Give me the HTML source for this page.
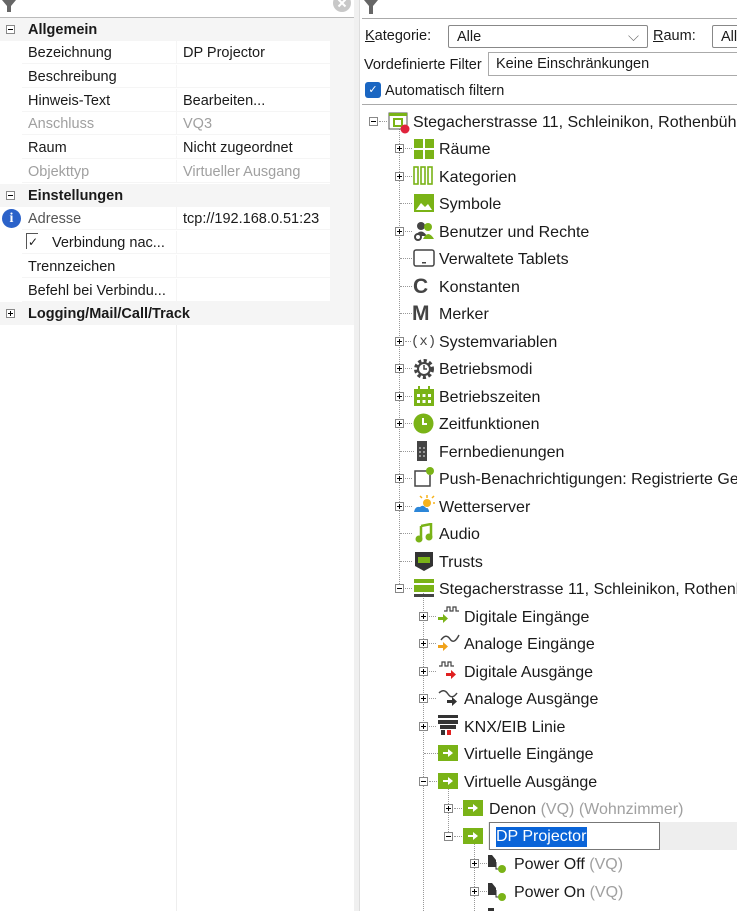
<!DOCTYPE html>
<html><head><meta charset="utf-8">
<style>
*{margin:0;padding:0;box-sizing:border-box}
body{width:737px;height:911px;overflow:hidden;background:#fff;font-family:"Segoe UI","Liberation Sans","DejaVu Sans",sans-serif;font-size:14.5px;color:#1a1a1a;position:relative}
.a{position:absolute;white-space:nowrap}
.g{color:#a0a0a0}
.row{position:absolute;left:22px;width:308px;height:23px;background:#f5f5f5}
.c1,.c2{position:absolute;top:0;height:22px;background:#fff;line-height:24px;padding-left:6px}
.c1{left:0;width:154px}.c2{left:155px;width:153px}
.sec{position:absolute;left:0;width:330px;height:23px;background:#f5f5f5;font-weight:bold;line-height:24px;padding-left:28px}
.bx{position:absolute;width:9px;height:9px;border:1px solid #888;background:#fff}
.bx::before{content:"";position:absolute;left:1px;top:3px;width:5px;height:1px;background:#000}
.bx.p::after{content:"";position:absolute;left:3px;top:1px;width:1px;height:5px;background:#000}
.t{position:absolute;font-size:16px;line-height:20px;white-space:nowrap;color:#1a1a1a;margin-top:2px}
.vl{position:absolute;width:0;border-left:1px dotted #999}
.hl{position:absolute;height:0;border-top:1px dotted #999}
.ic{position:absolute}
.q{color:#a0a0a0}
</style></head><body>

<!-- LEFT PANEL -->
<div class="a" style="left:0;top:0;width:354px;height:911px;background:#fff"></div>
<div class="a" style="left:176px;top:325px;width:1px;height:586px;background:#eee"></div>
<svg class="ic" style="left:2px;top:0" width="14" height="12"><path d="M0 0H14L9 6V12H5V6Z" fill="#666"/></svg>
<svg class="ic" style="left:332px;top:0" width="20" height="14"><circle cx="10" cy="3" r="9" fill="#c8c8c8"/><path d="M6.5 -0.5L13.5 6.5M13.5 -0.5L6.5 6.5" stroke="#fff" stroke-width="2"/></svg>
<div class="a" style="left:0;top:17px;width:354px;height:1px;background:#bbb"></div>
<div class="a" style="left:330px;top:18px;width:24px;height:307px;background:#f5f5f5"></div>

<div class="sec" style="top:18px">Allgemein</div>
<div class="bx" style="left:6px;top:25px"></div>
<div class="row" style="top:41px"><div class="c1">Bezeichnung</div><div class="c2">DP Projector</div></div>
<div class="row" style="top:65px"><div class="c1">Beschreibung</div><div class="c2"></div></div>
<div class="row" style="top:89px"><div class="c1">Hinweis-Text</div><div class="c2">Bearbeiten...</div></div>
<div class="row" style="top:112px"><div class="c1 g">Anschluss</div><div class="c2 g">VQ3</div></div>
<div class="row" style="top:136px"><div class="c1">Raum</div><div class="c2">Nicht zugeordnet</div></div>
<div class="row" style="top:160px"><div class="c1 g">Objekttyp</div><div class="c2 g">Virtueller Ausgang</div></div>
<div class="sec" style="top:184px">Einstellungen</div>
<div class="bx" style="left:6px;top:191px"></div>
<div class="row" style="top:207px"><div class="c1" style="color:#555">Adresse</div><div class="c2">tcp://192.168.0.51:23</div></div>
<div class="a" style="left:2px;top:209px;width:19px;height:19px;border-radius:50%;background:#2b62c9;color:#fff;font:bold 14px/19px 'Liberation Serif',serif;text-align:center">i</div>
<div class="row" style="top:231px"><div class="c1" style="padding-left:30px">Verbindung nac...</div><div class="c2"></div></div>
<div class="a" style="left:26px;top:233px;width:12px;height:16px;border-left:1px solid #555;border-top:1px solid #555;font-size:12px;line-height:16px;padding-left:1px">✓</div>
<div class="row" style="top:255px"><div class="c1">Trennzeichen</div><div class="c2"></div></div>
<div class="row" style="top:279px"><div class="c1">Befehl bei Verbindu...</div><div class="c2"></div></div>
<div class="sec" style="top:302px">Logging/Mail/Call/Track</div>
<div class="bx p" style="left:6px;top:309px"></div>

<!-- SPLITTER -->
<div class="a" style="left:354px;top:0;width:6px;height:911px;background:#f0f0f0"></div>
<div class="a" style="left:359px;top:0;width:1px;height:911px;background:#ddd"></div>

<!-- RIGHT PANEL -->
<svg class="ic" style="left:364px;top:0" width="14" height="14"><path d="M0 0H14L9 6V14H5V6Z" fill="#666"/></svg>
<div class="a" style="left:362px;top:18px;width:375px;height:1px;background:#aaa"></div>
<div class="a" style="left:365px;top:26px;line-height:20px"><u>K</u>ategorie:</div>
<div class="a" style="left:448px;top:25px;width:200px;height:23px;border:1px solid #888;border-radius:2px;padding-left:8px;line-height:22px">Alle<span style="position:absolute;right:8px;top:0;color:#666">⌵</span></div>
<div class="a" style="left:653px;top:26px;line-height:20px"><u>R</u>aum:</div>
<div class="a" style="left:712px;top:25px;width:40px;height:23px;border:1px solid #888;border-radius:2px;padding-left:8px;line-height:22px">Alle</div>
<div class="a" style="left:364px;top:55px;line-height:20px">Vordefinierte Filter</div>
<div class="a" style="left:488px;top:52px;width:260px;height:24px;border:1px solid #aaa;padding-left:7px;line-height:23px">Keine Einschränkungen</div>
<div class="a" style="left:365px;top:82px;width:16px;height:16px;border-radius:3px;background:#1a66c2;color:#fff;font-size:11px;line-height:16px;text-align:center">✓</div>
<div class="a" style="left:385px;top:81px;line-height:20px">Automatisch filtern</div>
<div class="a" style="left:362px;top:104px;width:375px;height:1px;background:#aaa"></div>

<!-- tree lines -->
<div class="vl" style="left:399px;top:126px;height:462px"></div>
<div class="vl" style="left:423px;top:593px;height:318px"></div>
<div class="vl" style="left:448px;top:786px;height:50px"></div>
<div class="vl" style="left:474px;top:841px;height:70px"></div>

<!-- root -->
<div class="bx" style="left:369px;top:117px"></div>
<div class="hl" style="left:379px;top:121px;width:8px"></div>
<svg class="ic" style="left:388px;top:112px" width="22" height="22"><rect x="1" y="1" width="18" height="16" fill="#fff" stroke="#555"/><rect x="1" y="1" width="18" height="3" fill="#7ab317"/><rect x="6" y="7" width="8" height="7" fill="#fff" stroke="#7ab317" stroke-width="2"/><circle cx="17" cy="17" r="4.5" fill="#e0233c"/></svg>
<div class="t" style="left:413px;top:111px">Stegacherstrasse 11, Schleinikon, Rothenbühl</div>

<!-- level1 -->
<div class="bx p" style="left:395px;top:144px"></div><div class="hl" style="left:405px;top:148px;width:7px"></div>
<svg class="ic" style="left:414px;top:139px" width="20" height="20"><rect x="0" y="0" width="9" height="9" fill="#7ab317"/><rect x="11" y="0" width="9" height="9" fill="#7ab317"/><rect x="0" y="11" width="9" height="9" fill="#7ab317"/><rect x="11" y="11" width="9" height="9" fill="#7ab317"/></svg>
<div class="t" style="left:439px;top:138px">Räume</div>

<div class="bx p" style="left:395px;top:172px"></div><div class="hl" style="left:405px;top:176px;width:7px"></div>
<svg class="ic" style="left:413px;top:166px" width="22" height="20" fill="none" stroke="#7ab317" stroke-width="1.6"><rect x="1" y="1" width="4" height="17"/><rect x="8" y="1" width="4" height="17"/><rect x="15" y="1" width="4" height="17"/></svg>
<div class="t" style="left:439px;top:166px">Kategorien</div>

<div class="hl" style="left:400px;top:203px;width:12px"></div>
<svg class="ic" style="left:414px;top:194px" width="20" height="18"><rect width="20" height="18" fill="#7ab317"/><path d="M2 16L7 9L11 13L14 10L18 16Z" fill="#fff"/></svg>
<div class="t" style="left:439px;top:193px">Symbole</div>

<div class="bx p" style="left:395px;top:227px"></div><div class="hl" style="left:405px;top:231px;width:7px"></div>
<svg class="ic" style="left:413px;top:221px" width="22" height="20"><circle cx="8" cy="5" r="4" fill="#444"/><path d="M2 15Q8 6 14 15Z" fill="#444"/><circle cx="5" cy="16" r="3" fill="#fff" stroke="#444" stroke-width="2"/><circle cx="15" cy="6" r="4" fill="#7ab317"/><path d="M10 18Q15 8 21 18Z" fill="#7ab317"/></svg>
<div class="t" style="left:439px;top:221px">Benutzer und Rechte</div>

<div class="hl" style="left:400px;top:258px;width:12px"></div>
<svg class="ic" style="left:413px;top:249px" width="22" height="18"><rect x="1" y="1" width="20" height="16" rx="2" fill="#fff" stroke="#444" stroke-width="1.5"/><rect x="9" y="13" width="4" height="1.5" fill="#444"/></svg>
<div class="t" style="left:439px;top:248px">Verwaltete Tablets</div>

<div class="hl" style="left:400px;top:286px;width:12px"></div>
<div class="a" style="left:413px;top:275px;font:bold 21px/24px 'Liberation Sans',sans-serif;color:#444">C</div>
<div class="t" style="left:439px;top:276px">Konstanten</div>

<div class="hl" style="left:400px;top:313px;width:12px"></div>
<div class="a" style="left:412px;top:302px;font:bold 21px/24px 'Liberation Sans',sans-serif;color:#444">M</div>
<div class="t" style="left:439px;top:303px">Merker</div>

<div class="bx p" style="left:395px;top:337px"></div><div class="hl" style="left:405px;top:341px;width:6px"></div>
<div class="a" style="left:411px;top:332px;font:14px/20px 'Liberation Mono',monospace;color:#444">(x)</div>
<div class="t" style="left:439px;top:331px">Systemvariablen</div>

<div class="bx p" style="left:395px;top:364px"></div><div class="hl" style="left:405px;top:368px;width:7px"></div>
<svg class="ic" style="left:414px;top:359px" width="20" height="20"><circle cx="10" cy="10" r="8" fill="none" stroke="#444" stroke-width="4" stroke-dasharray="3 2.3"/><circle cx="10" cy="10" r="6" fill="#fff" stroke="#444" stroke-width="2"/><path d="M10 6V10H13" stroke="#444" stroke-width="1.5" fill="none"/></svg>
<div class="t" style="left:439px;top:358px">Betriebsmodi</div>

<div class="bx p" style="left:395px;top:392px"></div><div class="hl" style="left:405px;top:396px;width:7px"></div>
<svg class="ic" style="left:414px;top:386px" width="20" height="20"><rect x="0" y="3" width="20" height="17" fill="#7ab317"/><rect x="4" y="0" width="2" height="5" fill="#7ab317"/><rect x="14" y="0" width="2" height="5" fill="#7ab317"/><g fill="#fff"><rect x="3" y="8" width="3" height="3"/><rect x="8.5" y="8" width="3" height="3"/><rect x="14" y="8" width="3" height="3"/><rect x="3" y="14" width="3" height="3"/><rect x="8.5" y="14" width="3" height="3"/><rect x="14" y="14" width="3" height="3"/></g></svg>
<div class="t" style="left:439px;top:386px">Betriebszeiten</div>

<div class="bx p" style="left:395px;top:419px"></div><div class="hl" style="left:405px;top:423px;width:7px"></div>
<svg class="ic" style="left:413px;top:413px" width="21" height="21"><circle cx="10.5" cy="10.5" r="10" fill="#7ab317"/><path d="M10 5V11H14" stroke="#fff" stroke-width="2" fill="none"/></svg>
<div class="t" style="left:439px;top:413px">Zeitfunktionen</div>

<div class="hl" style="left:400px;top:451px;width:14px"></div>
<svg class="ic" style="left:417px;top:441px" width="12" height="20"><rect width="10" height="20" fill="#444"/><g fill="#999"><rect x="2" y="6" width="2" height="2"/><rect x="6" y="6" width="2" height="2"/><rect x="2" y="10" width="2" height="2"/><rect x="6" y="10" width="2" height="2"/><rect x="2" y="14" width="2" height="2"/><rect x="6" y="14" width="2" height="2"/></g></svg>
<div class="t" style="left:439px;top:441px">Fernbedienungen</div>

<div class="bx p" style="left:395px;top:474px"></div><div class="hl" style="left:405px;top:478px;width:7px"></div>
<svg class="ic" style="left:413px;top:466px" width="22" height="22"><path d="M14 5H2V20H17V9" fill="none" stroke="#444" stroke-width="1.5"/><circle cx="17" cy="5" r="4" fill="#7ab317"/></svg>
<div class="t" style="left:439px;top:468px">Push-Benachrichtigungen: Registrierte Geräte</div>

<div class="bx p" style="left:395px;top:502px"></div><div class="hl" style="left:405px;top:506px;width:7px"></div>
<svg class="ic" style="left:413px;top:495px" width="22" height="20"><circle cx="14" cy="8" r="4" fill="#f6b21b"/><g stroke="#f6b21b" stroke-width="1.5"><path d="M14 0V3M20 8H22M19 3L21 1M14 13V15M9 3L7 1"/></g><path d="M1 17Q2 11 7 12Q10 9 13 13Q16 13 16 17Z" fill="#2c86d8"/></svg>
<div class="t" style="left:439px;top:496px">Wetterserver</div>

<div class="hl" style="left:400px;top:533px;width:12px"></div>
<svg class="ic" style="left:415px;top:523px" width="18" height="20"><path d="M6 3L16 1V14" stroke="#7ab317" stroke-width="2.5" fill="none"/><path d="M6 3V16" stroke="#7ab317" stroke-width="2.5"/><circle cx="4" cy="16" r="3.5" fill="#7ab317"/><circle cx="14" cy="14" r="3.5" fill="#7ab317"/></svg>
<div class="t" style="left:439px;top:523px">Audio</div>

<div class="hl" style="left:400px;top:561px;width:12px"></div>
<svg class="ic" style="left:414px;top:550px" width="20" height="22"><path d="M1 2H19V16L10 21L1 16Z" fill="#333"/><rect x="4" y="7" width="12" height="6" fill="#7ab317"/></svg>
<div class="t" style="left:439px;top:551px">Trusts</div>

<div class="bx" style="left:395px;top:584px"></div><div class="hl" style="left:405px;top:588px;width:7px"></div>
<svg class="ic" style="left:414px;top:579px" width="20" height="18"><rect y="0" width="20" height="4" fill="#7ab317"/><rect y="6" width="20" height="7" fill="#7ab317"/><rect y="15" width="20" height="3" fill="#444"/></svg>
<div class="t" style="left:439px;top:578px">Stegacherstrasse 11, Schleinikon, Rothenbühl</div>

<!-- level2 -->
<div class="bx p" style="left:419px;top:612px"></div><div class="hl" style="left:429px;top:616px;width:7px"></div>
<svg class="ic" style="left:438px;top:606px" width="22" height="20"><path d="M6 5H9V1H12V5H15V1H18V5H21" fill="none" stroke="#444" stroke-width="1.2"/><path d="M0 11H5V8L10 12.5L5 17V14H0Z" fill="#7ab317"/></svg>
<div class="t" style="left:464px;top:606px">Digitale Eingänge</div>

<div class="bx p" style="left:419px;top:639px"></div><div class="hl" style="left:429px;top:643px;width:7px"></div>
<svg class="ic" style="left:438px;top:633px" width="22" height="20"><path d="M3 7Q8 0 12 6T21 2" fill="none" stroke="#444" stroke-width="1.5"/><path d="M0 12H5V9L10 13.5L5 18V15H0Z" fill="#f0a21b"/></svg>
<div class="t" style="left:464px;top:633px">Analoge Eingänge</div>

<div class="bx p" style="left:419px;top:667px"></div><div class="hl" style="left:429px;top:671px;width:7px"></div>
<svg class="ic" style="left:438px;top:661px" width="22" height="20"><path d="M1 5H4V1H7V5H10V1H13V5H16" fill="none" stroke="#444" stroke-width="1.2"/><path d="M8 12H13V9L18 13.5L13 18V15H8Z" fill="#e02020"/></svg>
<div class="t" style="left:464px;top:661px">Digitale Ausgänge</div>

<div class="bx p" style="left:419px;top:694px"></div><div class="hl" style="left:429px;top:698px;width:7px"></div>
<svg class="ic" style="left:438px;top:688px" width="22" height="20"><path d="M1 5Q6 0 10 6T19 5" fill="none" stroke="#444" stroke-width="1.5"/><path d="M9 12H14V9L19 13.5L14 18V15H9Z" fill="#333"/></svg>
<div class="t" style="left:464px;top:688px">Analoge Ausgänge</div>

<div class="bx p" style="left:419px;top:722px"></div><div class="hl" style="left:429px;top:726px;width:7px"></div>
<svg class="ic" style="left:438px;top:715px" width="20" height="22"><rect y="0" width="20" height="3" fill="#333"/><rect y="5" width="20" height="4" fill="#333"/><rect x="2" y="10" width="16" height="4" fill="#333"/><rect x="3" y="15" width="4" height="5" fill="#333"/><rect x="9" y="15" width="4" height="5" fill="#e02020"/></svg>
<div class="t" style="left:464px;top:716px">KNX/EIB Linie</div>

<div class="hl" style="left:424px;top:753px;width:14px"></div>
<svg class="ic" style="left:438px;top:745px" width="20" height="16"><rect width="20" height="16" fill="#7ab317"/><path d="M5 7H10V4L15 8L10 12V9H5Z" fill="#fff"/></svg>
<div class="t" style="left:464px;top:743px">Virtuelle Eingänge</div>

<div class="bx" style="left:419px;top:777px"></div><div class="hl" style="left:429px;top:781px;width:8px"></div>
<svg class="ic" style="left:438px;top:773px" width="20" height="16"><rect width="20" height="16" fill="#7ab317"/><path d="M5 7H10V4L15 8L10 12V9H5Z" fill="#fff"/></svg>
<div class="t" style="left:464px;top:771px">Virtuelle Ausgänge</div>

<!-- level3 -->
<div class="bx p" style="left:444px;top:804px"></div><div class="hl" style="left:454px;top:808px;width:8px"></div>
<svg class="ic" style="left:463px;top:800px" width="20" height="16"><rect width="20" height="16" fill="#7ab317"/><path d="M5 7H10V4L15 8L10 12V9H5Z" fill="#fff"/></svg>
<div class="t" style="left:489px;top:798px">Denon <span class="q">(VQ) (Wohnzimmer)</span></div>

<div class="a" style="left:488px;top:822px;width:249px;height:28px;background:#eee"></div>
<div class="bx" style="left:444px;top:832px"></div><div class="hl" style="left:454px;top:836px;width:8px"></div>
<svg class="ic" style="left:463px;top:828px" width="20" height="16"><rect width="20" height="16" fill="#7ab317"/><path d="M5 7H10V4L15 8L10 12V9H5Z" fill="#fff"/></svg>
<div class="a" style="left:489px;top:822px;width:171px;height:28px;border:1px solid #777;background:#fff"></div>
<div class="t" style="left:496px;top:825px;background:#0a64d8;color:#fff;padding-right:1px">DP Projector</div>

<!-- level4 -->
<div class="bx p" style="left:470px;top:859px"></div><div class="hl" style="left:480px;top:863px;width:7px"></div>
<svg class="ic" style="left:488px;top:853px" width="20" height="22"><path d="M0 2H4L8 7V14H0Z" fill="#333"/><path d="M8 9V16H11" stroke="#333" fill="none"/><circle cx="14" cy="16" r="4" fill="#7ab317"/></svg>
<div class="t" style="left:514px;top:853px">Power Off <span class="q">(VQ)</span></div>

<div class="bx p" style="left:470px;top:887px"></div><div class="hl" style="left:480px;top:891px;width:7px"></div>
<svg class="ic" style="left:488px;top:881px" width="20" height="22"><path d="M0 2H4L8 7V14H0Z" fill="#333"/><path d="M8 9V16H11" stroke="#333" fill="none"/><circle cx="14" cy="16" r="4" fill="#7ab317"/></svg>
<div class="t" style="left:514px;top:881px">Power On <span class="q">(VQ)</span></div>
<div class="a" style="left:488px;top:908px;width:6px;height:3px;background:#333"></div>

</body></html>
